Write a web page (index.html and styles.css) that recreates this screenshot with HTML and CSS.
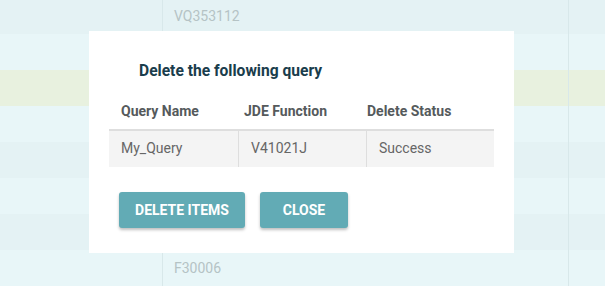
FILE: index.html
```html
<!DOCTYPE html>
<html>
<head>
<meta charset="utf-8">
<link rel="stylesheet" href="styles.css">
</head>
<body>
<div class="grid">
  <div class="row r-dark"><div class="c1"></div><div class="c2">VQ353112</div><div class="c3"></div></div>
  <div class="row r-light"><div class="c1"></div><div class="c2"></div><div class="c3"></div></div>
  <div class="row r-green"><div class="c1"></div><div class="c2"></div><div class="c3"></div></div>
  <div class="row r-light"><div class="c1"></div><div class="c2"></div><div class="c3"></div></div>
  <div class="row r-dark"><div class="c1"></div><div class="c2"></div><div class="c3"></div></div>
  <div class="row r-light"><div class="c1"></div><div class="c2"></div><div class="c3"></div></div>
  <div class="row r-dark"><div class="c1"></div><div class="c2"></div><div class="c3"></div></div>
  <div class="row r-light"><div class="c1"></div><div class="c2">F30006</div><div class="c3"></div></div>
</div>
<div class="modal">
  <h2 class="title">Delete the following query</h2>
  <div class="table">
    <div class="thead">
      <div class="th">Query Name</div>
      <div class="th">JDE Function</div>
      <div class="th">Delete Status</div>
    </div>
    <div class="tbody">
      <div class="td">My_Query</div>
      <div class="td">V41021J</div>
      <div class="td">Success</div>
    </div>
  </div>
  <div class="actions">
    <button class="btn btn-delete">DELETE ITEMS</button>
    <button class="btn btn-close">CLOSE</button>
  </div>
</div>
</body>
</html>
```
FILE: styles.css
```css
html, body {
  margin: 0;
  padding: 0;
  width: 605px;
  height: 286px;
  overflow: hidden;
  font-family: Roboto, "Liberation Sans", sans-serif;
}
.grid {
  margin-top: -2px;
  display: flex;
  flex-direction: column;
}
.row {
  height: 36px;
  display: grid;
  grid-template-columns: 162px 407px 36px;
}
.r-dark { background: #e4f2f4; }
.r-light { background: #e8f6f8; }
.r-green { background: #e8f1df; }
.c2 {
  border-left: 1px solid #d8e8ea;
  border-right: 1px solid #d8e8ea;
  padding-left: 11px;
  font-size: 14px;
  line-height: 36px;
  color: #b5c3c5;
}
.modal {
  position: absolute;
  left: 89px;
  top: 31px;
  width: 425px;
  height: 222px;
  background: #fff;
  box-sizing: border-box;
  padding-top: 30px;
}
.title {
  margin: 0 0 12px 50px;
  font-size: 15.6px;
  line-height: 20px;
  font-weight: 700;
  color: #1a3d4c;
}
.table {
  margin: 0 20px;
}
.thead {
  display: grid;
  grid-template-columns: 123px 123px 139px;
  height: 36px;
  border-bottom: 2px solid #dedede;
}
.th {
  padding-left: 12px;
  font-size: 14px;
  font-weight: 700;
  color: #555a5c;
  line-height: 36px;
}
.tbody {
  display: grid;
  grid-template-columns: 129px 128px 128px;
  height: 36px;
  background: #f4f4f4;
}
.td {
  padding-left: 12px;
  font-size: 14px;
  color: #666;
  line-height: 35px;
}
.td + .td {
  border-left: 1px solid #dedede;
}
.actions {
  display: flex;
  gap: 15px;
  margin: 25px 0 0 30px;
}
.btn {
  height: 36px;
  border: none;
  border-radius: 3px;
  background: #62abb5;
  color: #fff;
  font-family: Roboto, "Liberation Sans", sans-serif;
  font-size: 14px;
  font-weight: 700;
  box-shadow: 0 2px 3px rgba(0,0,0,0.25);
  padding: 0;
}
.btn-delete { width: 126px; }
.btn-close { width: 88px; }
```
